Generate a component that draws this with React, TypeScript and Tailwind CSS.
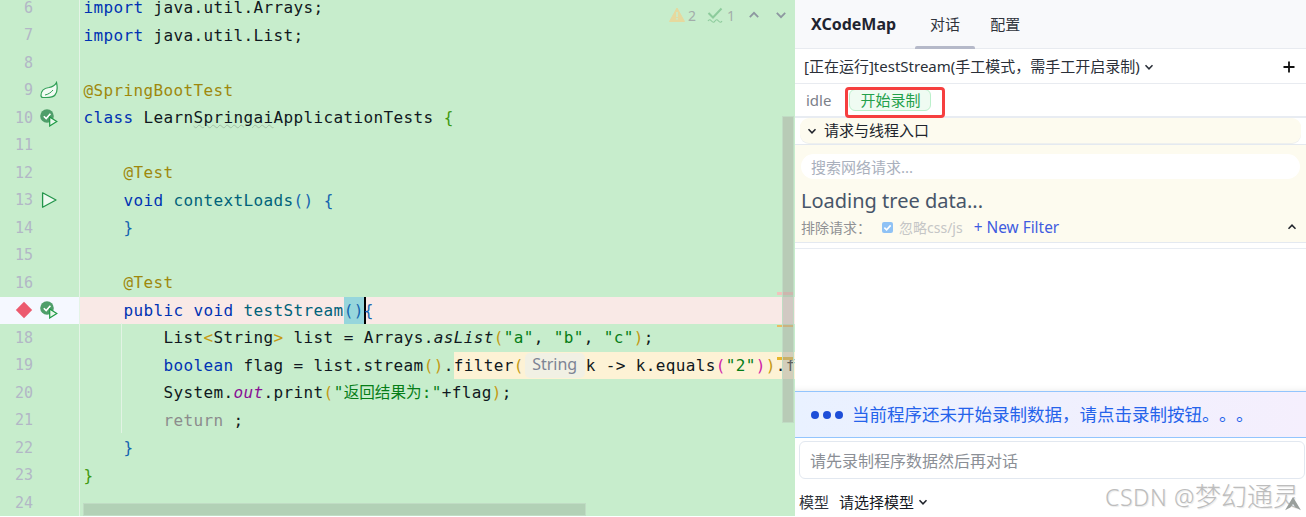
import React from "react";

const K = ({ children }: { children: React.ReactNode }) => <span className="text-[#0033b3]">{children}</span>;
const A = ({ children }: { children: React.ReactNode }) => <span className="text-[#9e880d]">{children}</span>;
const M = ({ children }: { children: React.ReactNode }) => <span className="text-[#00627a]">{children}</span>;
const S = ({ children }: { children: React.ReactNode }) => <span className="text-[#067d17]">{children}</span>;
const Y = ({ children }: { children: React.ReactNode }) => <span className="text-[#c49a14]">{children}</span>;
const B = ({ children }: { children: React.ReactNode }) => <span className="text-[#1565b0]">{children}</span>;

const Leaf = () => (
  <svg width="18" height="18" viewBox="0 0 18 18" fill="none">
    <path d="M1 14.5C1 9.5 5 7 9 6.5C12 6 15 4.5 16.5 1.5C17.5 6 17.5 11 15 14C13 16.5 10 16.5 6 16.5H3C1.8 16.5 1 15.8 1 14.5Z" fill="#f2fbf3" stroke="#2f9e55" strokeWidth="1.2" />
    <path d="M5 14C8 13.5 11 11.5 13 9" stroke="#2f9e55" strokeWidth="1" />
  </svg>
);

const TestRun = () => (
  <svg width="18" height="18" viewBox="0 0 18 18" fill="none">
    <circle cx="7" cy="7" r="6.8" fill="#4f9e6a" />
    <path d="M3.8 7.2L6.2 9.6L10.4 4.8" stroke="#fff" strokeWidth="1.6" />
    <path d="M9.7 8L16.8 12.5L9.7 17Z" fill="#e9f8ec" stroke="#1f9a45" strokeWidth="1.2" />
  </svg>
);

const Run = () => (
  <svg width="18" height="18" viewBox="0 0 18 18" fill="none">
    <path d="M2.6 1.8L16 9L2.6 16.2Z" fill="#eefaf0" stroke="#22954a" strokeWidth="1.3" strokeLinejoin="round" />
  </svg>
);

const Breakpoint = () => (
  <svg width="18" height="18" viewBox="0 0 18 18">
    <path d="M9 0.8L17.2 9L9 17.2L0.8 9Z" fill="#ec5a6e" />
  </svg>
);

const Chevron = ({ up = false, size = 10 }: { up?: boolean; size?: number }) => (
  <svg width={size} height={size} viewBox="0 0 10 10" fill="none">
    <path d={up ? "M1.5 6.8L5 3.2L8.5 6.8" : "M1.5 3.2L5 6.8L8.5 3.2"} stroke="currentColor" strokeWidth="1.5" />
  </svg>
);

function Row({ n, icon, active, children }: { n: number; icon?: React.ReactNode; active?: boolean; children?: React.ReactNode }) {
  return (
    <div className={`flex h-[27.5px] shrink-0 ${active ? "bg-[#f9e9e6]" : ""}`}>
      <div className={`flex w-[80px] shrink-0 items-center border-r border-r-[#e4f4e6] ${active ? "bg-[#f5f8ff]" : ""}`}>
        <span className="flex w-[33px] justify-end text-[15px] text-[#b2b7c6]">{active ? <Breakpoint /> : n}</span>
        <span className="ml-[7px] flex w-[18px]">{icon}</span>
      </div>
      <div className="min-w-0 flex-1 overflow-hidden whitespace-pre pl-[3.5px] text-[16px] leading-[27.5px] tracking-[0.37px] text-[#101820]">{children}</div>
    </div>
  );
}

export default function App() {
  const cjk = "font-['Noto_Sans','Noto_Sans_CJK_SC',sans-serif]";
  return (
    <div className={`relative flex h-[517px] w-[1306px] overflow-hidden bg-white ${cjk}`}>
      {/* Editor */}
      <div className="relative h-[516px] w-[795px] shrink-0 overflow-hidden bg-[#c7edcc] font-['DejaVu_Sans_Mono','Noto_Sans_CJK_SC',monospace]">
        <div className="-mt-[6px] flex flex-col">
          <Row n={6}><K>import</K> java.util.Arrays;</Row>
          <Row n={7}><K>import</K> java.util.List;</Row>
          <Row n={8} />
          <Row n={9} icon={<Leaf />}><A>@SpringBootTest</A></Row>
          <Row n={10} icon={<TestRun />}>
            <K>class</K> Learn<span className="underline decoration-[#a3bfa6] decoration-wavy decoration-1">Springai</span>ApplicationTests <span className="text-[#3f9a12]">{"{"}</span>
          </Row>
          <Row n={11} />
          <Row n={12}>{"    "}<A>@Test</A></Row>
          <Row n={13} icon={<Run />}>{"    "}<K>void</K> <M>contextLoads</M><B>()</B> <B>{"{"}</B></Row>
          <Row n={14}>{"    "}<B>{"}"}</B></Row>
          <Row n={15} />
          <Row n={16}>{"    "}<A>@Test</A></Row>
          <Row n={17} active icon={<TestRun />}>
            {"    "}<K>public</K> <K>void</K> <M>testStream</M>
            <span className="inline-block bg-[#97d6dc] text-[#1565b0]">()</span>
            <span className="inline-block text-[#1565b0] shadow-[inset_2px_0_0_#000]">{"{"}</span>
          </Row>
          <Row n={18}>{"        "}List<Y>{"<"}</Y>String<Y>{">"}</Y> list = Arrays.<i>asList</i><Y>(</Y><S>"a"</S>, <S>"b"</S>, <S>"c"</S><Y>)</Y>;</Row>
          <Row n={19}>
            <div className="flex">
              <span>{"        "}<K>boolean</K> flag = list.stream<Y>()</Y>.</span>
              <span className="flex flex-1 bg-[#fdf2d5]">
                <span>filter<Y>(</Y></span>
                <span className={`mx-[1px] my-[1px] flex h-[25px] w-[60px] items-center justify-center rounded-[5px] bg-[#f1f0e4] text-[16px] tracking-normal text-[#7d8494] ${cjk}`}>String</span>
                <span>k -&gt; k.equals<span className="text-[#d01fa8]">(</span><S>"2"</S><span className="text-[#d01fa8]">)</span><Y>)</Y>.filter</span>
              </span>
            </div>
          </Row>
          <Row n={20}>{"        "}System.<i className="text-[#871094]">out</i>.print<Y>(</Y><S>"<span className="text-[15.6px] tracking-[0px]">返回结果为</span>:"</S>+flag<Y>)</Y>;</Row>
          <Row n={21}>{"        "}<span className="text-[#8c8c8c]">return</span> ;</Row>
          <Row n={22}>{"    "}<B>{"}"}</B></Row>
          <Row n={23}><span className="text-[#3f9a12]">{"}"}</span></Row>
          <Row n={24} />
        </div>

        {/* indent guide */}
        <div className="absolute left-[121px] top-[323px] h-[110px] w-[1px] bg-[#e2f3e4]" />

        {/* inspection widget */}
        <div className="absolute left-[669px] top-[6px] flex h-[18px] items-center font-['Noto_Sans',sans-serif] text-[14px] text-[#a3adaa]">
          <svg width="16" height="16" viewBox="0 0 16 16">
            <path d="M8 1L15.5 14.5H0.5Z" fill="#e6d99e" stroke="#e6d99e" strokeLinejoin="round" />
            <rect x="7.2" y="5" width="1.6" height="5" fill="#c7edcc" />
            <rect x="7.2" y="11" width="1.6" height="1.6" fill="#c7edcc" />
          </svg>
          <span className="ml-[3px] w-[19px]">2</span>
          <svg width="16" height="16" viewBox="0 0 16 16" fill="none">
            <path d="M1.5 6L6 10.5L14.5 1.5" stroke="#8dcb9c" strokeWidth="2" />
            <path d="M1 14Q2.5 11.5 4.5 14T8 14T11.5 14T15 14" stroke="#8dcb9c" strokeWidth="1.1" />
          </svg>
          <span className="ml-[4px] w-[21px]">1</span>
          <span className="text-[#8d97a0]"><Chevron up size={12} /></span>
          <span className="ml-[15px] text-[#8d97a0]"><Chevron size={12} /></span>
        </div>

        {/* error stripes and scrollbars */}
        <div className="absolute left-[777px] top-[292px] h-[3px] w-[17px] bg-[#f1c3bd]" />
        <div className="absolute left-[777px] top-[325px] h-[2px] w-[17px] bg-[#e9bd62]" />
        <div className="absolute left-[777px] top-[357px] h-[3px] w-[17px] bg-[#e8b62c]" />
        <div className="absolute left-[782px] top-[116px] h-[307px] w-[12px] border border-[#c0dcc4] bg-[#a9a9a0]/50" />
        <div className="absolute left-[83px] top-[503px] h-[13px] w-[503px] border border-[#c0dcc4] bg-[#a9c4ac]/70" />
      </div>

      {/* Right panel */}
      <div className="flex h-[517px] min-w-0 flex-1 flex-col bg-white text-[15px]">
        <div className="flex h-[49px] shrink-0 items-stretch border-b border-b-[#e8ebf0] bg-[#f8f9fb] pl-[16px]">
          <span className="flex items-center text-[16px] font-bold text-[#1f2430]">XCodeMap</span>
          <span className="relative ml-[19px] flex w-[60px] items-center justify-center text-[#30343c]">
            对话
            <span className="absolute bottom-[-1px] left-0 h-[3px] w-full rounded-t-[2px] bg-[#b5b9c9]" />
          </span>
          <span className="ml-[15px] flex items-center text-[#30343c]">配置</span>
        </div>

        <div className="flex h-[35px] shrink-0 items-center border-b border-b-[#e8ebf0] px-[9px] pt-[1px] text-[#2a2f38]">
          <span>[正在运行]testStream(手工模式，需手工开启录制)</span>
          <span className="ml-[4px] text-[#2a2f38]"><Chevron /></span>
          <svg width="14" height="14" viewBox="0 0 14 14" className="ml-auto mr-[1px]">
            <path d="M7 1.5V12.5M1.5 7H12.5" stroke="#111" strokeWidth="1.8" />
          </svg>
        </div>

        <div className="flex h-[32px] shrink-0 items-center pl-[11px]">
          <span className="text-[15px] text-[#7b8089]">idle</span>
          <span className="ml-[18px] flex h-[22px] w-[82px] items-center justify-center rounded-[6px] border border-[#bbf0cb] bg-[#effbf2] text-[#23a04a]">开始录制</span>
        </div>

        <div className="border-t-2 border-t-[#e8ecf2] px-[5px] pb-[1px]">
          <div className="flex h-[25px] items-center rounded-[9px] bg-[#fdfbef] pl-[7px] text-[#20242c] shadow-[0_1px_0_#eef0ee]">
            <Chevron />
            <span className="ml-[7px]">请求与线程入口</span>
          </div>
        </div>

        <div className="flex h-[99px] shrink-0 flex-col border-y border-y-[#e4e9f0] bg-[#fdfbef] px-[6px]">
          <div className="mt-[9px] flex h-[25px] shrink-0 items-center rounded-full bg-white pl-[10px] pt-[1px] text-[#a9b0bd]">搜索网络请求...</div>
          <div className="mt-[8px] text-[20px] leading-[28px] text-[#475569]">Loading tree data...</div>
          <div className="mt-[2px] flex h-[20px] items-center text-[14px] text-[#8f9194]">
            <span className="w-[72px]">排除请求：</span>
            <span className="ml-[9px] flex h-[11px] w-[11px] items-center justify-center rounded-[2px] bg-[#8fc2f5]">
              <svg width="9" height="9" viewBox="0 0 10 10" fill="none"><path d="M1.5 5.2L4 7.6L8.5 2.6" stroke="#fff" strokeWidth="1.8" /></svg>
            </span>
            <span className="ml-[6px] text-[#c5c6c6]">忽略css/js</span>
            <span className="ml-[11px] mt-[1px] text-[15.4px] text-[#3f5ce0]">+ New Filter</span>
            <span className="ml-auto mr-[3px] text-[#20242c]"><Chevron up /></span>
          </div>
        </div>

        <div className="mt-[5px] h-[143px] shrink-0 border-t border-t-[#e8ecf2] bg-white shadow-[inset_0_-6px_6px_-6px_#e6e6e6]" />

        <div className="flex h-[47px] shrink-0 items-center border-y border-y-[#93c5fd] bg-gradient-to-r from-[#e9f1ff] to-[#f5effd] pl-[16px] text-[#2563eb]">
          <span className="flex gap-[4px]">
            <span className="h-[8px] w-[8px] rounded-full bg-[#1d4ed8]" />
            <span className="h-[8px] w-[8px] rounded-full bg-[#1d4ed8]" />
            <span className="h-[8px] w-[8px] rounded-full bg-[#1d4ed8]" />
          </span>
          <span className="ml-[9px] text-[17.5px]">
            当前程序还未开始录制数据，请点击录制按钮
            <span className="inline-block w-[17px]">。</span>
            <span className="inline-block w-[17px]">。</span>
            <span className="inline-block w-[17px]">。</span>
          </span>
        </div>

        <div className="ml-[4px] mr-[1px] mt-[3px] flex h-[38px] shrink-0 items-center rounded-[6px] border border-[#e2e8f0] pl-[10px] pt-[1px] text-[16px] text-[#8b8f96]">请先录制程序数据然后再对话</div>

        <div className="ml-[4px] mt-[12px] flex items-center text-[#30343c]">
          <span>模型</span>
          <span className="ml-[10px] text-[#15181e]">请选择模型</span>
          <span className="ml-[4px] text-[#20242c]"><Chevron /></span>
        </div>
      </div>

      {/* Watermark */}
      <div className="absolute left-[1105px] top-[478px] text-[23px] font-light leading-[36px] tracking-[0.6px] text-[#bdbdbd] [text-shadow:1px_1px_1px_#e8e8e8]">
        CSDN @<span className="text-[26px] tracking-[0px]">梦幻通灵</span>
      </div>
      <svg width="16" height="14" viewBox="0 0 18 16" className="absolute left-[1285px] top-[497px]">
        <path d="M9 0L18 15L12 12L9 8L6 12L0 15Z" fill="#9a9f9c" />
      </svg>

      {/* Red annotation */}
      <div className="absolute left-[845px] top-[87px] h-[31px] w-[100px] rounded-[4px] border-[3px] border-[#f63f3f]" />
    </div>
  );
}
